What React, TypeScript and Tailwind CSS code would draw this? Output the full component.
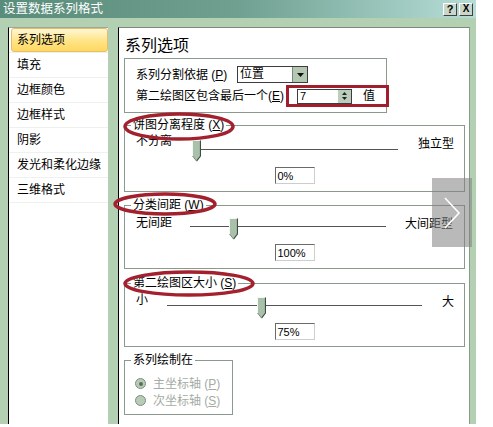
import React from "react";

const FONT = "font-['Liberation_Sans','Noto_Sans_CJK_SC',sans-serif]";

function Thumb() {
  return (
    <svg width="9" height="22" viewBox="0 0 9 22">
      <polygon points="0.5,0.5 8.5,0.5 8.5,16 4.5,21 0.5,16" fill="#a9c1ab" />
      <polyline points="0.5,16 0.5,0.5 8.5,0.5" fill="none" stroke="#f4f8f4" strokeWidth="1" />
      <polyline points="8.5,0.5 8.5,16 4.5,21.2" fill="none" stroke="#3e4e42" strokeWidth="1.2" />
      <line x1="0.5" y1="16" x2="4.5" y2="21" stroke="#7c8e80" strokeWidth="1" />
    </svg>
  );
}

function SliderGroup(props: {
  legend: React.ReactNode;
  left: string;
  right: string;
  value: string;
  fsCls: string;
  labelW: string;
  labelTop: string;
  trackW: string;
  trackTop: string;
  thumbCls: string;
  rightCls: string;
  inputMt: string;
  pb: string;
}) {
  return (
    <fieldset className={`ml-[5px] w-[341px] border border-[#8a9a8c] px-[6px] ${props.fsCls} ${props.pb}`}>
      <legend className="whitespace-nowrap px-[2px] text-[12px] leading-[16px]">{props.legend}</legend>
      <div className="flex h-[30px] items-start pl-[5px]">
        <div className={`shrink-0 whitespace-nowrap ${props.labelW} ${props.labelTop} text-[12px] leading-[16px]`}>{props.left}</div>
        <div className={`relative h-full shrink-0 ${props.trackW}`}>
          <div className={`absolute left-0 right-0 ${props.trackTop} h-[2px] border-t border-[#555] border-b border-b-white`} />
          <div className={`absolute ${props.thumbCls}`}>
            <Thumb />
          </div>
        </div>
        <div className={`shrink-0 whitespace-nowrap ${props.rightCls} text-[12px] leading-[16px]`}>{props.right}</div>
      </div>
      <div className={`flex justify-center ${props.inputMt}`}>
        <div className="flex h-[17px] w-[40px] items-center border border-t-[#6a6a6a] border-l-[#6a6a6a] border-r-[#c8d0c8] border-b-[#c8d0c8] pl-[2px] text-[11px] leading-[14px]">
          {props.value}
        </div>
      </div>
    </fieldset>
  );
}

export default function App() {
  const items = ["系列选项", "填充", "边框颜色", "边框样式", "阴影", "发光和柔化边缘", "三维格式"];
  return (
    <div className={`relative h-[427px] w-[493px] overflow-hidden bg-white text-black ${FONT}`}>
      <div className="flex h-[424px] w-[476px] flex-col">
        {/* title bar */}
        <div className="flex h-[18px] items-center justify-between bg-linear-to-r from-[#5a8c7b] via-[#6fa090] to-[#b6ded8] pl-[3px] pr-[3px]">
          <span className="text-[12.5px] leading-[14px] text-white">设置数据系列格式</span>
          <div className="flex gap-[2px]">
            <div className="flex h-[13px] w-[14px] items-center justify-center border border-t-white border-l-white border-r-[#404040] border-b-[#404040] bg-[#c9d6c9] text-[11px] font-bold leading-none">
              ?
            </div>
            <div className="flex h-[13px] w-[14px] items-center justify-center border border-t-white border-l-white border-r-[#404040] border-b-[#404040] bg-[#c9d6c9] text-[10px] font-bold leading-none">
              X
            </div>
          </div>
        </div>
        {/* body */}
        <div className="flex flex-1 bg-[#b4d0b3] pl-[8px] pt-[9px] pr-[6px]">
          {/* left list */}
          <div className="flex w-[100px] flex-col border-l border-t border-l-black border-t-[#9aa89a] bg-white">
            {items.map((t, i) =>
              i === 0 ? (
                <div key={t} className="h-[25px] border-b border-[#eef2ee] pl-[2px]">
                  <div className="flex h-[24px] items-center rounded-[3px] border border-[#e2bd6a] bg-linear-to-b from-[#fff7d4] via-[#ffe58a] to-[#ffd85e] pl-[5px] text-[12px]">
                    {t}
                  </div>
                </div>
              ) : (
                <div key={t} className="flex h-[25px] items-center border-b border-[#eef2ee] pl-[8px] text-[12px]">
                  {t}
                </div>
              )
            )}
          </div>
          {/* right panel */}
          <div className="ml-[10px] flex w-[352px] flex-col border-l border-t border-r border-l-black border-t-[#7c887c] border-r-[#8a9a8a] bg-white">
            <div className="h-[30px] pl-[6px] pt-[8px] text-[16px] leading-[20px]">系列选项</div>
            {/* box 1 */}
            <div className="ml-[5px] h-[55px] w-[263px] border border-[#8a9a8c] pl-[11px] pt-[7px]">
              <div className="flex h-[17px] items-center">
                <div className="w-[101px] shrink-0 whitespace-nowrap text-[12px] leading-[16px]">
                  系列分割依据 (<u>P</u>)
                </div>
                <div className="flex h-[17px] w-[71px] shrink-0 border border-[#3c3c3c] bg-white">
                  <div className="flex-1 pl-[2px] text-[12px] leading-[15px]">位置</div>
                  <div className="flex w-[15px] items-center justify-center border-l border-[#7a8a7a] bg-[#b3c7b3]">
                    <svg width="7" height="4" viewBox="0 0 7 4">
                      <polygon points="0,0 7,0 3.5,4" fill="#111" />
                    </svg>
                  </div>
                </div>
              </div>
              <div className="mt-[2px] flex h-[22px] items-center">
                <div className="w-[150px] shrink-0 whitespace-nowrap text-[12px] leading-[16px]">
                  第二绘图区包含最后一个(<u>E</u>)
                </div>
                <div className="flex h-[22px] w-[103px] shrink-0 items-center border-[3px] border-[#a11f2c]">
                  <div className="ml-[8px] flex h-[15px] w-[55px] border border-[#3c3c3c]">
                    <div className="flex-1 pl-[2px] text-[11px] leading-[13px]">7</div>
                    <div className="flex w-[13px] flex-col items-center justify-center gap-[2px] bg-[#bccdbc]">
                      <svg width="5" height="3" viewBox="0 0 5 3">
                        <polygon points="2.5,0 5,3 0,3" fill="#222" />
                      </svg>
                      <svg width="5" height="3" viewBox="0 0 5 3">
                        <polygon points="0,0 5,0 2.5,3" fill="#222" />
                      </svg>
                    </div>
                  </div>
                  <div className="ml-[11px] text-[12px] leading-[16px]">值</div>
                </div>
              </div>
            </div>

            <SliderGroup
              legend={<>饼图分离程度 (<u>X</u>)</>}
              left="不分离"
              right="独立型"
              value="0%"
              fsCls="mt-[4px]"
              labelW="w-[61px]"
              labelTop="mt-[0px]"
              trackW="w-[201px]"
              trackTop="top-[16px]"
              thumbCls="left-[-5px] top-[7px]"
              rightCls="ml-[20px] mt-[3px]"
              inputMt="mt-[4px]"
              pb="pb-[7px]"
            />
            <SliderGroup
              legend={<>分类间距 (<u>W</u>)</>}
              left="无间距"
              right="大间距型"
              value="100%"
              fsCls="mt-[5px]"
              labelW="w-[54px]"
              labelTop="mt-[2px]"
              trackW="w-[196px]"
              trackTop="top-[13px]"
              thumbCls="left-[39px] top-[5px]"
              rightCls="ml-[19px] mt-[3px]"
              inputMt="mt-[1px]"
              pb="pb-[7px]"
            />
            <SliderGroup
              legend={<>第二绘图区大小 (<u>S</u>)</>}
              left="小"
              right="大"
              value="75%"
              fsCls="mt-[6px]"
              labelW="w-[31px]"
              labelTop="mt-[1px]"
              trackW="w-[255px]"
              trackTop="top-[14px]"
              thumbCls="left-[90px] top-[6px]"
              rightCls="ml-[20px] mt-[3px]"
              inputMt="mt-[2px]"
              pb="pb-[6px]"
            />

            <fieldset className="ml-[5px] mt-[5px] w-[109px] border border-[#8a9a8c] px-[6px] pb-[5px]">
              <legend className="whitespace-nowrap px-[2px] text-[12px] leading-[16px]">系列绘制在</legend>
              <div className="mt-[7px] flex h-[17px] items-center pl-[4px]">
                <div className="flex h-[11px] w-[11px] items-center justify-center rounded-full border border-[#7e907e] bg-[#b7cbb7]">
                  <div className="h-[4px] w-[4px] rounded-full bg-[#5d6e5d]" />
                </div>
                <span className="ml-[7px] whitespace-nowrap text-[12px] leading-[16px] text-[#a3aba3]">
                  主坐标轴 (<u>P</u>)
                </span>
              </div>
              <div className="flex h-[17px] items-center pl-[4px]">
                <div className="h-[11px] w-[11px] rounded-full border border-[#7e907e] bg-[#b7cbb7]" />
                <span className="ml-[7px] whitespace-nowrap text-[12px] leading-[16px] text-[#a3aba3]">
                  次坐标轴 (<u>S</u>)
                </span>
              </div>
            </fieldset>
          </div>
        </div>
      </div>

      {/* red annotation ellipses */}
      <svg className="pointer-events-none absolute left-0 top-0" width="493" height="427" viewBox="0 0 493 427">
        <ellipse cx="179" cy="126.5" rx="54" ry="12.5" fill="none" stroke="#a3212e" strokeWidth="3.5" />
        <ellipse cx="165" cy="204" rx="50" ry="10" fill="none" stroke="#a3212e" strokeWidth="3.5" />
        <ellipse cx="189" cy="283.5" rx="64" ry="11.5" fill="none" stroke="#a3212e" strokeWidth="3.5" />
      </svg>

      {/* gray chevron overlay */}
      <div className="absolute left-[432px] top-[178px] flex h-[69px] w-[40px] items-center justify-center bg-[#7f7f7f]/55">
        <svg width="20" height="34" viewBox="0 0 20 34">
          <polyline points="3,2 17,17 3,32" fill="none" stroke="#ffffff" strokeWidth="1.6" />
        </svg>
      </div>
    </div>
  );
}
